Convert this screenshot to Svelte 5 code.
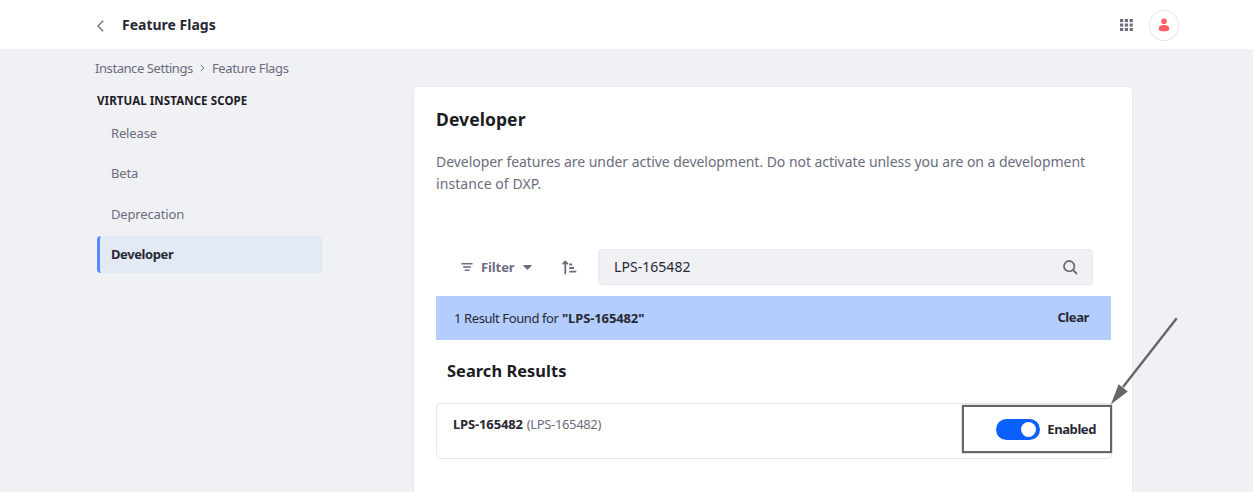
<script>
  const links = ['Release', 'Beta', 'Deprecation', 'Developer'];
  const active = 'Developer';
  const query = 'LPS-165482';
  let enabled = $state(true);
</script>

<div class="page">
  <header>
    <div class="heading">
      <svg class="back" width="8" height="12" viewBox="0 0 8 12"><path d="M7.200.8 2 6l5.200 5.200" /></svg>
      <h1>Feature Flags</h1>
    </div>
    <div class="tools">
      <svg class="grid" width="13" height="12" viewBox="0 0 13 12">
        {#each [0, 4.5, 9] as y}
          {#each [0, 4.8, 9.6] as x}<rect {x} {y} width="3.2" height="3.1" />{/each}
        {/each}
      </svg>
      <div class="avatar">
        <svg width="12" height="14" viewBox="0 0 12 14"><circle cx="6" cy="3.200" r="2.800" /><path d="M6 6.900c3 0 5.400 1.300 5.400 3.800 0 1.800-1.500 2.600-5.400 2.600S.6 12.500.6 10.700c0-2.500 2.400-3.800 5.400-3.800z" /></svg>
      </div>
    </div>
  </header>

  <nav class="crumbs">
    <span class="c1">Instance Settings</span>
    <svg width="5" height="8" viewBox="0 0 5 8"><path d="m.8.900 3 3.100-3 3.100" /></svg>
    <span class="c2">Feature Flags</span>
  </nav>

  <div class="body">
    <aside>
      <h2>VIRTUAL INSTANCE SCOPE</h2>
      <ul>
        {#each links as link}
          <li class:active={link === active}>{link}</li>
        {/each}
      </ul>
    </aside>

    <main>
      <h3>Developer</h3>
      <p class="intro">Developer features are under active development. Do not activate unless you are on a development<br /><span>instance of DXP.</span></p>

      <div class="bar">
        <svg class="lines" width="12" height="8" viewBox="0 0 12 8"><path d="M.5.8h11M2.200 4h7.800M3.700 7.200h4.800" /></svg>
        <span class="filter">Filter</span>
        <svg class="caret" width="9" height="5" viewBox="0 0 9 5"><path d="M.9 0h7.200c.7 0 .8.500.4.900L5 4.500c-.3.300-.7.300-1 0L.5.900C.1.500.2 0 .9 0z" /></svg>
        <svg class="sort" width="15" height="15" viewBox="0 0 15 15"><path d="M3.300 14.200V1.500M.7 4.100l2.600-2.600 2.600 2.600M7.300 4.500h2.900M7.300 8h4.700M7.300 11.600h7" /></svg>
        <div class="search">
          <span>{query}</span>
          <svg width="15" height="15" viewBox="0 0 15 15"><circle cx="6.200" cy="6.200" r="5.200" /><path d="m10 10 4 4" /></svg>
        </div>
      </div>

      <div class="result">
        <div class="message"><span class="found">1 Result Found for</span><b>"{query}"</b></div>
        <b class="clear">Clear</b>
      </div>

      <h4>Search Results</h4>

      <div class="item">
        <div class="name"><b>{query}</b><span>({query})</span></div>
        <div class="switch">
          <button class="toggle" class:on={enabled} aria-label="Enabled" onclick={() => (enabled = !enabled)}><i></i></button>
          <b>Enabled</b>
        </div>
        <div class="frame"></div>
      </div>
    </main>
  </div>

  <svg class="arrow" width="70" height="90" viewBox="0 0 70 90"><path class="shaft" d="M66.700 3.200 13 72" /><path class="head" d="M.8 89.500 8.700 69.300 17.800 76.500z" /></svg>
</div>

<style>
  :global(body) { margin: 0; background: #f0f1f5; overflow: hidden; }
  .page { position: relative; height: 492px; overflow: hidden; box-sizing: border-box; color: #272833; background: #f0f1f5; font: 13px/20px "Noto Sans", sans-serif; white-space: nowrap; }
  * { box-sizing: border-box; }
  h1, h2, h3, h4, p, ul { margin: 0; padding: 0; list-style: none; }
  svg { display: block; flex: none; fill: none; stroke: #6b6c7e; }
  b { font-weight: 700; }
  header { height: 49px; background: #fff; display: flex; justify-content: space-between; padding: 0 74px 0 96px; }
  .heading { display: flex; align-items: center; gap: 18px; padding-top: 1px; }
  .back { margin-top: 2px; stroke-width: 1.300; }
  h1 { font-size: 14px; line-height: 20px; }
  .tools { display: flex; align-items: center; gap: 16px; padding-top: 1px; }
  .grid { fill: #6b6c7e; stroke: none; }
  .avatar { width: 30px; height: 31px; border: 1px solid #e7e7ed; border-radius: 50%; display: grid; place-items: center; }
  .avatar svg { fill: #ff5f5f; stroke: none; }
  .crumbs { display: flex; align-items: center; height: 20px; margin: 9px 0 0 95px; color: #6b6c7e; letter-spacing: -.39px; }
  .c1 { width: 105px; letter-spacing: -.43px; }
  .crumbs svg { margin-right: 7px; }
  .body { display: flex; padding-left: 97px; align-items: flex-start; }
  aside { width: 225px; margin: 13px 91px 0 0; }
  h2 { font-size: 11.500px; line-height: 20px; letter-spacing: .09px; color: #1c1c24; }
  ul { display: grid; gap: 4px; margin-top: 4px; }
  li { height: 36.300px; line-height: 36px; padding-left: 14px; color: #6b6c7e; letter-spacing: -.15px; }
  li.active { height: 37px; color: #272833; font-weight: 700; background: #e3e9f5; border-left: 3px solid #528bff; padding-left: 11px; border-radius: 4px; letter-spacing: -.4px; }
  main { width: 720px; height: 440px; margin-top: 8px; border: 1px solid #e7e7ed; border-radius: 4px; background: #fff; padding: 20px 21px 0 22px; }
  h3, h4 { font-size: 17.500px; line-height: 24px; letter-spacing: .08px; color: #1c1c24; }
  .intro { margin-top: 20px; font-size: 14px; line-height: 22px; letter-spacing: -.045px; color: #6b6c7e; }
  .intro span { letter-spacing: .06px; }
  .bar { display: flex; align-items: center; height: 36px; margin-top: 54px; padding-left: 25px; color: #6b6c7e; }
  .lines { stroke-width: 1.600; }
  .filter { width: 42px; margin-left: 8px; font-weight: 700; letter-spacing: -.1px; }
  .caret { fill: #6b6c7e; stroke: none; }
  .sort { margin-left: 30px; stroke-width: 1.800; }
  .search { width: 495px; height: 36px; margin-left: 21px; padding: 0 14px 0 15px; display: flex; align-items: center; justify-content: space-between; background: #f0f1f5; border: 1px solid #e7e7ed; border-radius: 4px; font-size: 14px; letter-spacing: .05px; color: #272833; }
  .search svg { stroke-width: 1.800; }
  .result { display: flex; justify-content: space-between; width: 675px; height: 44px; margin-top: 11px; padding: 12px 22px 0 18px; background: #b3cdff; }
  .message { display: flex; letter-spacing: -.12px; }
  .found { width: 108px; letter-spacing: -.4px; }
  .clear { margin-top: -1px; letter-spacing: -.4px; }
  h4 { margin: 19px 0 0 11px; font-size: 16.400px; letter-spacing: .06px; }
  .item { position: relative; display: flex; justify-content: space-between; width: 676px; height: 56px; margin-top: 20px; border: 1px solid #e7e7ed; border-radius: 4px; padding: 10px 15px 0 16px; }
  .name { display: flex; gap: 4px; letter-spacing: -.15px; }
  .name span { color: #6b6c7e; letter-spacing: -.35px; }
  .switch { display: flex; gap: 7px; margin-top: 5px; height: 21px; align-items: center; }
  .switch b { margin-top: -1px; letter-spacing: -.42px; }
  .toggle { width: 44px; height: 21px; padding: 3px 4px; border: 0; border-radius: 11px; background: #a7a9bc; display: flex; }
  .toggle.on { background: #0b5fff; justify-content: flex-end; }
  .toggle i { width: 15px; height: 15px; border-radius: 50%; background: #fff; }
  .frame { position: absolute; left: 525px; top: 1px; width: 150px; height: 48px; border: 2px solid #666; box-shadow: 0 0 0 .5px #6666; }
  .arrow { position: absolute; left: 1110px; top: 315px; }
  .shaft { stroke: #666; stroke-width: 2.400; }
  .head { fill: #666; stroke: none; }
</style>
